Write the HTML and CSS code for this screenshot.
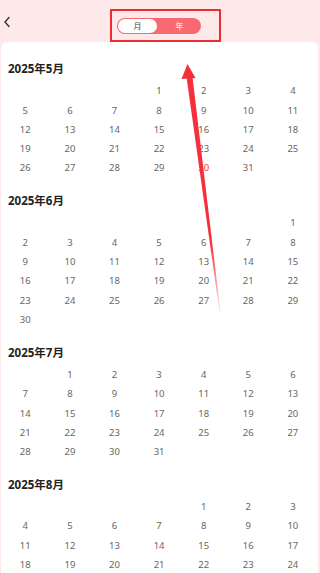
FILE: index.html
```html
<!DOCTYPE html>
<html lang="zh">
<head>
<meta charset="utf-8">
<link rel="stylesheet" href="styles.css">
</head>
<body>
<div class="page">
  <header class="topbar">
    <div class="back">
      <svg width="8" height="12" viewBox="0 0 8 12"><path d="M6 1.5 L2 6 L6 10.5" fill="none" stroke="#333" stroke-width="1.4" stroke-linecap="round" stroke-linejoin="round"/></svg>
    </div>
    <div class="toggle-box">
      <div class="toggle">
        <span class="seg on">月</span>
        <span class="seg off">年</span>
      </div>
    </div>
  </header>
  <main class="card">
    <section class="month">
      <h2>2025年5月</h2>
      <div class="grid">
        <span></span><span></span><span></span><span>1</span><span>2</span><span>3</span><span>4</span>
        <span>5</span><span>6</span><span>7</span><span>8</span><span>9</span><span>10</span><span>11</span>
        <span>12</span><span>13</span><span>14</span><span>15</span><span>16</span><span>17</span><span>18</span>
        <span>19</span><span>20</span><span>21</span><span>22</span><span>23</span><span>24</span><span>25</span>
        <span>26</span><span>27</span><span>28</span><span>29</span><span class="today">30</span><span>31</span>
      </div>
    </section>
    <section class="month">
      <h2>2025年6月</h2>
      <div class="grid">
        <span></span><span></span><span></span><span></span><span></span><span></span><span>1</span>
        <span>2</span><span>3</span><span>4</span><span>5</span><span>6</span><span>7</span><span>8</span>
        <span>9</span><span>10</span><span>11</span><span>12</span><span>13</span><span>14</span><span>15</span>
        <span>16</span><span>17</span><span>18</span><span>19</span><span>20</span><span>21</span><span>22</span>
        <span>23</span><span>24</span><span>25</span><span>26</span><span>27</span><span>28</span><span>29</span>
        <span>30</span>
      </div>
    </section>
    <section class="month">
      <h2>2025年7月</h2>
      <div class="grid">
        <span></span><span>1</span><span>2</span><span>3</span><span>4</span><span>5</span><span>6</span>
        <span>7</span><span>8</span><span>9</span><span>10</span><span>11</span><span>12</span><span>13</span>
        <span>14</span><span>15</span><span>16</span><span>17</span><span>18</span><span>19</span><span>20</span>
        <span>21</span><span>22</span><span>23</span><span>24</span><span>25</span><span>26</span><span>27</span>
        <span>28</span><span>29</span><span>30</span><span>31</span>
      </div>
    </section>
    <section class="month">
      <h2>2025年8月</h2>
      <div class="grid">
        <span></span><span></span><span></span><span></span><span>1</span><span>2</span><span>3</span>
        <span>4</span><span>5</span><span>6</span><span>7</span><span>8</span><span>9</span><span>10</span>
        <span>11</span><span>12</span><span>13</span><span>14</span><span>15</span><span>16</span><span>17</span>
        <span>18</span><span>19</span><span>20</span><span>21</span><span>22</span><span>23</span><span>24</span>
        <span>25</span><span>26</span><span>27</span><span>28</span><span>29</span><span>30</span><span>31</span>
      </div>
    </section>
  </main>
  <svg class="arrow" width="320" height="573" viewBox="0 0 320 573">
    <defs>
      <linearGradient id="fade" x1="0" y1="78" x2="0" y2="312" gradientUnits="userSpaceOnUse">
        <stop offset="0" stop-color="#f5303c" stop-opacity="1"/>
        <stop offset="0.7" stop-color="#f5303c" stop-opacity="1"/>
        <stop offset="1" stop-color="#f5303c" stop-opacity="0.1"/>
      </linearGradient>
    </defs>
    <polygon points="187.5,64 181.5,79 195.5,78" fill="#f5303c"/>
    <polygon points="186.5,77 192.5,77 220.5,312 219.5,312" fill="url(#fade)"/>
  </svg>
</div>
</body>
</html>
```

FILE: styles.css
```css
html, body {
  margin: 0;
  padding: 0;
}
body {
  background: #fde9ea;
  font-family: "Noto Sans", "Noto Sans CJK SC", sans-serif;
  width: 320px;
  height: 573px;
  overflow: hidden;
}
.page {
  position: relative;
  width: 320px;
  height: 573px;
  overflow: hidden;
}
.topbar {
  height: 42px;
  display: flex;
  align-items: center;
  position: relative;
}
.back {
  width: 8px;
  height: 12px;
  margin-left: 3px;
  margin-top: 2px;
  display: flex;
}
.toggle-box {
  position: absolute;
  left: 110px;
  top: 9px;
  width: 102px;
  height: 29px;
  border: 2px solid #ec2b33;
  display: flex;
  align-items: center;
  padding-left: 5px;
  box-sizing: content-box;
}
.toggle {
  width: 84px;
  height: 16px;
  border-radius: 8px;
  background: #f86a72;
  display: flex;
  align-items: stretch;
}
.seg {
  font-size: 8px;
  line-height: 16px;
  text-align: center;
  font-family: "Noto Sans CJK SC", sans-serif;
}
.seg.on {
  width: 39px;
  margin: 1px;
  line-height: 14px;
  background: #fff;
  border-radius: 7px;
  color: #444;
}
.seg.off {
  flex: 1;
  color: #fff;
}
.card {
  margin: 0 2px 0 1px;
  background: #fff;
  border-radius: 6px 6px 0 0;
  padding-top: 17px;
  height: 600px;
}
.month {
  padding-bottom: 13.4px;
}
.month h2 {
  margin: 0 0 2.3px 0;
  padding-left: 7px;
  font-size: 11.5px;
  line-height: 20px;
  font-weight: 700;
  color: #222;
  font-family: "Noto Sans", "Noto Sans CJK SC", sans-serif;
}
.grid {
  display: grid;
  grid-template-columns: repeat(7, 44.6px);
  grid-auto-rows: 19.3px;
  padding-left: 2px;
}
.grid span {
  font-size: 9.5px;
  line-height: 19.3px;
  text-align: center;
  color: #666;
}
.grid span.today {
  color: #f5333f;
}
.arrow {
  position: absolute;
  left: 0;
  top: 0;
  pointer-events: none;
}
```
